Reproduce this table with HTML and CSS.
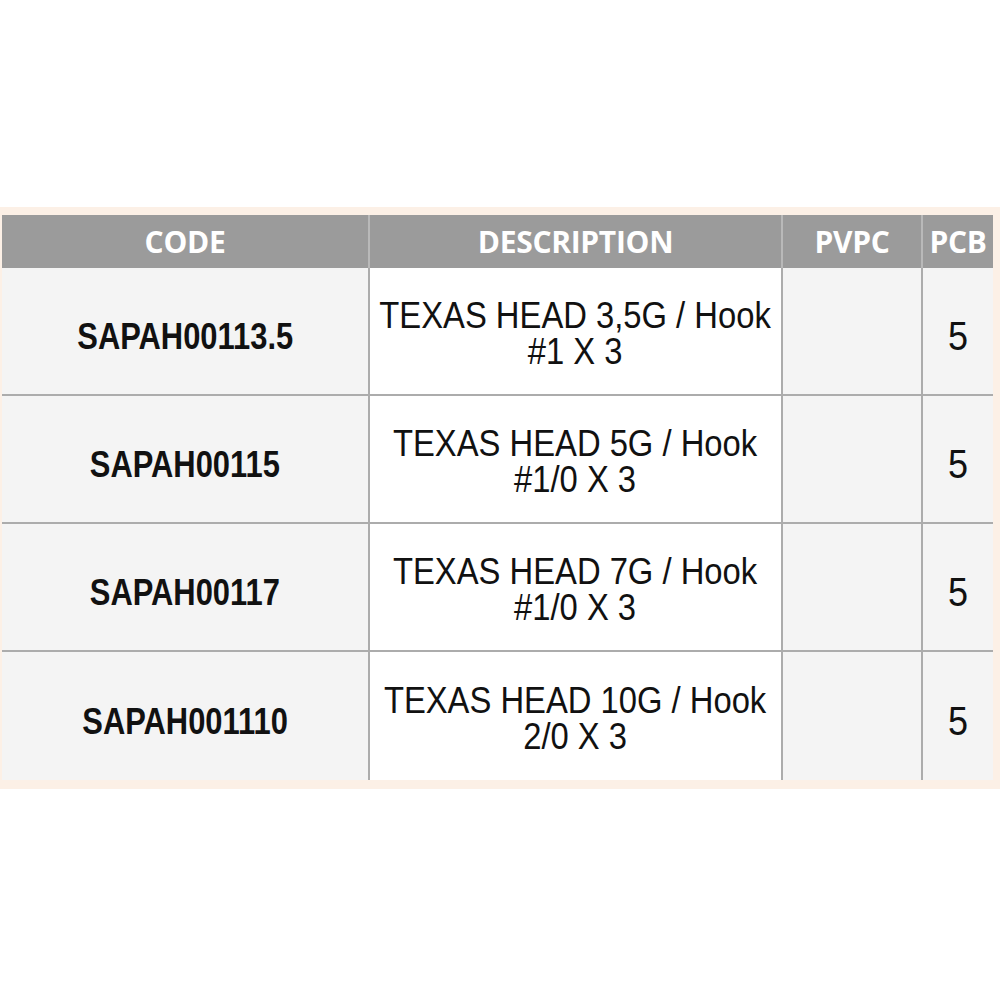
FILE: index.html
```html
<!DOCTYPE html>
<html>
<head>
<meta charset="utf-8">
<link rel="stylesheet" href="styles.css">
</head>
<body>
<div class="frame">
  <div class="table">
    <div class="th">CODE</div>
    <div class="th">DESCRIPTION</div>
    <div class="th">PVPC</div>
    <div class="th last">PCB</div>

    <div class="td code"><span class="cd">SAPAH00113.5</span></div>
    <div class="td desc"><span class="ds"><span class="ln">TEXAS HEAD 3,5G / Hook</span><span class="ln">#1 X 3</span></span></div>
    <div class="td grey"></div>
    <div class="td grey last"><span class="num">5</span></div>

    <div class="td code"><span class="cd">SAPAH00115</span></div>
    <div class="td desc"><span class="ds"><span class="ln">TEXAS HEAD 5G / Hook</span><span class="ln">#1/0 X 3</span></span></div>
    <div class="td grey"></div>
    <div class="td grey last"><span class="num">5</span></div>

    <div class="td code"><span class="cd">SAPAH00117</span></div>
    <div class="td desc"><span class="ds"><span class="ln">TEXAS HEAD 7G / Hook</span><span class="ln">#1/0 X 3</span></span></div>
    <div class="td grey"></div>
    <div class="td grey last"><span class="num">5</span></div>

    <div class="td code bottom"><span class="cd">SAPAH001110</span></div>
    <div class="td desc bottom"><span class="ds"><span class="ln">TEXAS HEAD 10G / Hook</span><span class="ln">2/0 X 3</span></span></div>
    <div class="td grey bottom"></div>
    <div class="td grey last bottom"><span class="num">5</span></div>
  </div>
</div>
</body>
</html>
```
FILE: styles.css
```css
html, body {
  margin: 0;
  padding: 0;
  background: #ffffff;
}
.frame {
  margin-top: 207px;
  background: #fcf0e6;
  padding: 8px 7px 9px 2px;
}
.table {
  display: grid;
  grid-template-columns: 368px 413px 140px 70px;
  grid-template-rows: 53px 128px 128px 128px 128px;
}
.th {
  background: #9b9b9b;
  color: #ffffff;
  font-family: "Open Sans", sans-serif;
  font-weight: 700;
  font-size: 30px;
  display: flex;
  align-items: center;
  justify-content: center;
  border-right: 2px solid #b9b9b9;
  letter-spacing: -0.3px;
}
.th.last {
  border-right: none;
}
.td {
  display: flex;
  align-items: center;
  justify-content: center;
  border-right: 2px solid #acacac;
  border-bottom: 2px solid #acacac;
  padding-top: 11px;
  box-sizing: border-box;
  color: #111111;
  font-family: "Liberation Sans", Arial, sans-serif;
  white-space: nowrap;
}
.td.last {
  border-right: none;
}
.td.bottom {
  border-bottom: none;
}
.code {
  background: #f4f4f4;
}
.desc {
  background: #ffffff;
  padding-top: 6px;
}
.grey {
  background: #f4f4f4;
}
.cd {
  display: inline-block;
  font-weight: 700;
  font-size: 37px;
  transform: scaleX(0.835);
}
.ds {
  display: flex;
  flex-direction: column;
  align-items: center;
  font-size: 36px;
  transform: scaleX(0.91);
}
.ln {
  display: block;
  line-height: 36px;
  height: 36px;
}
.num {
  display: inline-block;
  font-size: 40px;
  transform: scaleX(0.9);
}
```
